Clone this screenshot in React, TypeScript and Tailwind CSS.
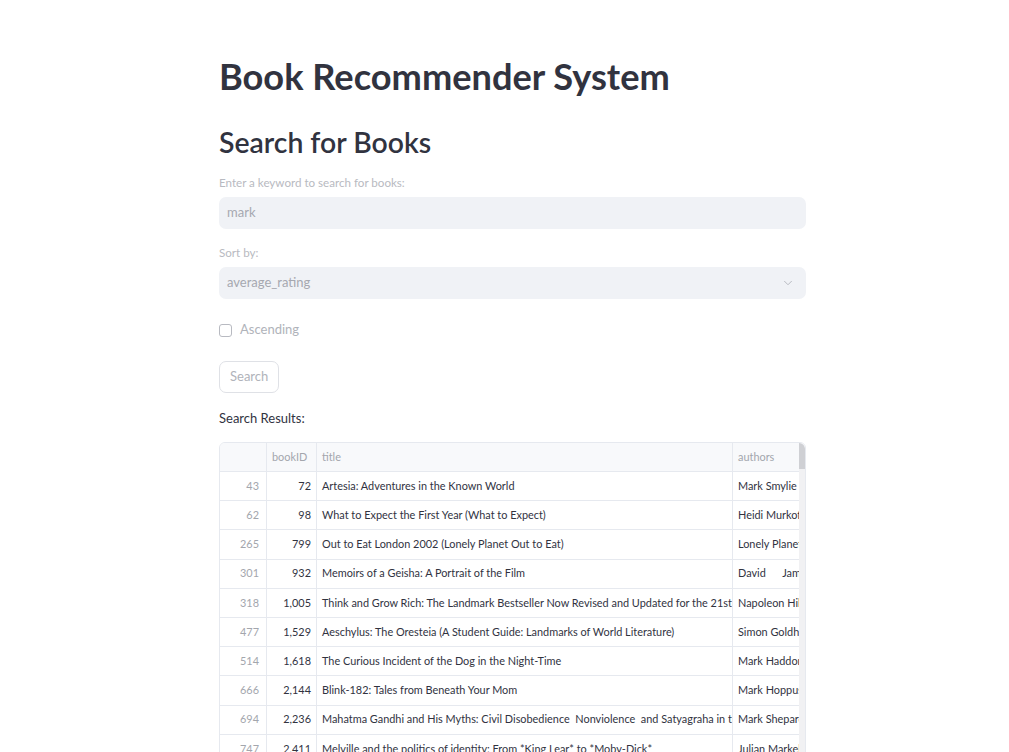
import { ChevronDown } from "lucide-react";

type Row = { idx: number; id: string; title: string; authors: string };

const rows: Row[] = [
  { idx: 43, id: "72", title: "Artesia: Adventures in the Known World", authors: "Mark Smylie" },
  { idx: 62, id: "98", title: "What to Expect the First Year (What to Expect)", authors: "Heidi Murkoff" },
  { idx: 265, id: "799", title: "Out to Eat London 2002 (Lonely Planet Out to Eat)", authors: "Lonely Planet" },
  { idx: 301, id: "932", title: "Memoirs of a Geisha: A Portrait of the Film", authors: "David      James" },
  { idx: 318, id: "1,005", title: "Think and Grow Rich: The Landmark Bestseller Now Revised and Updated for the 21st Century", authors: "Napoleon Hill" },
  { idx: 477, id: "1,529", title: "Aeschylus: The Oresteia (A Student Guide: Landmarks of World Literature)", authors: "Simon Goldhill" },
  { idx: 514, id: "1,618", title: "The Curious Incident of the Dog in the Night-Time", authors: "Mark Haddon" },
  { idx: 666, id: "2,144", title: "Blink-182: Tales from Beneath Your Mom", authors: "Mark Hoppus" },
  { idx: 694, id: "2,236", title: "Mahatma Gandhi and His Myths: Civil Disobedience  Nonviolence  and Satyagraha in the Real World", authors: "Mark Shepard" },
  { idx: 747, id: "2,411", title: "Melville and the politics of identity: From *King Lear* to *Moby-Dick*", authors: "Julian Markels" },
  { idx: 812, id: "2,609", title: "The Complete Stories", authors: "Mark Twain" },
];

function DataTable() {
  return (
    <div className="relative border border-[#e6e9ef] rounded-[6px] overflow-hidden text-[10.9px]">
      <div className="flex h-[29px] bg-[#f8f9fb] border-b border-[#e6e9ef] text-[#a3a6ad]">
        <div className="w-[47px] shrink-0 border-r border-[#e6e9ef]" />
        <div className="w-[50px] shrink-0 border-r border-[#e6e9ef] flex items-center px-[5px]">bookID</div>
        <div className="w-[416px] shrink-0 border-r border-[#e6e9ef] flex items-center px-[5px]">title</div>
        <div className="flex-1 flex items-center px-[5px] overflow-hidden whitespace-nowrap">authors</div>
      </div>
      {rows.map((r) => (
        <div key={r.idx} className="flex h-[29.2px] border-b border-[#e6e9ef] text-[#31333f]">
          <div className="w-[47px] shrink-0 border-r border-[#e6e9ef] flex items-center justify-end px-[7px] text-[#a3a6ad]">{r.idx}</div>
          <div className="w-[50px] shrink-0 border-r border-[#e6e9ef] flex items-center justify-end px-[5px]">{r.id}</div>
          <div className="w-[416px] shrink-0 border-r border-[#e6e9ef] flex items-center px-[5px] overflow-hidden whitespace-pre">{r.title}</div>
          <div className="flex-1 flex items-center px-[5px] overflow-hidden whitespace-pre mr-[6px]">{r.authors}</div>
        </div>
      ))}
      <div className="absolute top-0 right-0 bottom-0 w-[6px] bg-[#f1f1f3]">
        <div className="h-[26px] bg-[#cfd0d4] rounded-tr-[6px]" />
      </div>
    </div>
  );
}

export default function App() {
  return (
    <div className="h-[752px] overflow-hidden bg-white font-['Lato',sans-serif]">
      <div className="ml-[219px] w-[587px] pt-[54px]">
        <h1 className="text-[36.2px] font-bold leading-[44px] text-[#31333f]">Book Recommender System</h1>
        <h2 className="mt-[25px] text-[28.4px] font-semibold leading-[38px] text-[#31333f]">Search for Books</h2>

        <div className="mt-[14px] text-[11.6px] text-[#b8bac1] leading-[16px]">Enter a keyword to search for books:</div>
        <div className="mt-[6px] h-[32px] rounded-[7px] bg-[#f0f2f6] flex items-center px-[8px] text-[13px] text-[#a6a8b0]">mark</div>

        <div className="mt-[16px] text-[11.6px] text-[#b8bac1] leading-[16px]">Sort by:</div>
        <div className="mt-[6px] h-[32px] rounded-[7px] bg-[#f0f2f6] flex items-center justify-between pl-[8px] pr-[11px] text-[13px] text-[#a6a8b0]">
          <span>average_rating</span>
          <ChevronDown size={14} strokeWidth={1.6} className="text-[#b4b6bd]" />
        </div>

        <div className="mt-[23px] flex items-center gap-[8px] h-[16px]">
          <div className="w-[13px] h-[13px] rounded-[3px] border border-[#b8bac1]" />
          <span className="text-[13px] text-[#b0b3ba]">Ascending</span>
        </div>

        <button className="mt-[23px] h-[32px] px-[10px] rounded-[7px] border border-[#dfe1e6] text-[13px] text-[#b0b3ba] bg-white">Search</button>

        <div className="mt-[15px] text-[13px] text-[#31333f] leading-[20px]">Search Results:</div>
        <div className="mt-[14px]">
          <DataTable />
        </div>
      </div>
    </div>
  );
}
